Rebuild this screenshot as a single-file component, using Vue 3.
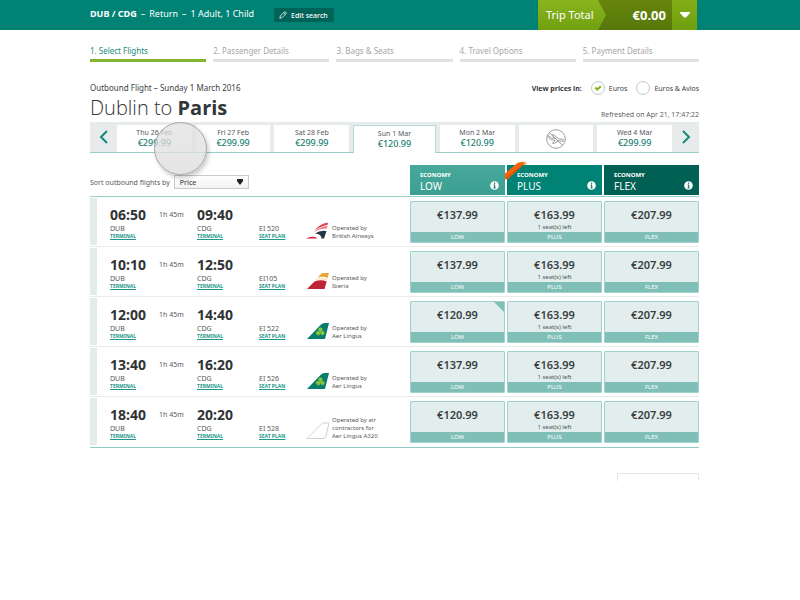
<script setup>
import { ref } from 'vue'

const steps = ['1. Select Flights', '2. Passenger Details', '3. Bags & Seats', '4. Travel Options', '5. Payment Details']

const days = [
  { date: 'Thu 26 Feb', price: '€299.99' },
  { date: 'Fri 27 Feb', price: '€299.99' },
  { date: 'Sat 28 Feb', price: '€299.99' },
  { date: 'Sun 1 Mar', price: '€120.99', active: true },
  { date: 'Mon 2 Mar', price: '€120.99' },
  { date: '', price: '' },
  { date: 'Wed 4 Mar', price: '€299.99' },
]

const fares = ['LOW', 'PLUS', 'FLEX']

const flights = [
  { dep: '06:50', arr: '09:40', no: 'EI 520', tail: 'ba', operator: ['Operated by', 'British Airways'], prices: ['€137.99', '€163.99', '€207.99'] },
  { dep: '10:10', arr: '12:50', no: 'EI105', tail: 'iberia', operator: ['Operated by', 'Iberia'], prices: ['€137.99', '€163.99', '€207.99'] },
  { dep: '12:00', arr: '14:40', no: 'EI 522', tail: 'lingus', operator: ['Operated by', 'Aer Lingus'], prices: ['€120.99', '€163.99', '€207.99'], lowest: true },
  { dep: '13:40', arr: '16:20', no: 'EI 526', tail: 'lingus', operator: ['Operated by', 'Aer Lingus'], prices: ['€137.99', '€163.99', '€207.99'] },
  { dep: '18:40', arr: '20:20', no: 'EI 528', tail: 'plain', operator: ['Operated by air', 'contractors for', 'Aer Lingus A320'], prices: ['€120.99', '€163.99', '€207.99'] },
]

const currency = ref('euros')
const sort = ref('Price')
</script>

<template>
  <div class="page">
    <header class="topbar">
      <p class="trip"><strong>DUB / CDG</strong><span>–</span><span>Return</span><span>–</span><span>1 Adult, 1 Child</span></p>
      <button class="edit" type="button">
        <svg viewBox="0 0 10 10" class="pencil"><path d="M1 9l.7-2.800L6.900 1q.5-.4 1 0l1.100 1.100q.4.500 0 1L3.800 8.300zM5.900 2l2.100 2.100" /></svg>
        Edit search
      </button>
      <div class="total">
        <span class="total-label">Trip Total</span>
        <strong class="total-value">€0.00</strong>
        <button class="total-toggle" type="button" aria-label="Trip details">
          <svg viewBox="0 0 12 8"><path d="M1 1h10v1L7 6.500H5L1 2z" /></svg>
        </button>
      </div>
    </header>

    <main class="content">
      <ol class="steps">
        <li v-for="(step, i) in steps" :key="step" :class="{ current: i === 0 }">{{ step }}</li>
      </ol>

      <section class="heading">
        <div>
          <p class="outbound">Outbound Flight – Sunday 1 March 2016</p>
          <h1>Dublin to <b>Paris</b></h1>
        </div>
        <div class="heading-side">
          <div class="currency">
            <b>View prices in:</b>
            <label>
              <span class="radio"><input v-model="currency" type="radio" name="currency" value="euros" />
                <svg v-if="currency === 'euros'" viewBox="0 0 8 8"><path d="M1.200 3.500l2 2L6.800 2.200" /></svg></span>
              Euros
            </label>
            <label>
              <span class="radio"><input v-model="currency" type="radio" name="currency" value="avios" />
                <svg v-if="currency === 'avios'" viewBox="0 0 8 8"><path d="M1.200 3.500l2 2L6.800 2.200" /></svg></span>
              Euros &amp; Avios
            </label>
          </div>
          <p class="refreshed">Refreshed on Apr 21, 17:47:22</p>
        </div>
      </section>

      <nav class="dates">
        <button class="arrow" type="button" aria-label="Earlier dates"><svg viewBox="0 0 10 14"><path d="M8 1L2 7l6 6" /></svg></button>
        <div class="days">
          <button v-for="(day, i) in days" :key="i" type="button" class="day" :class="{ active: day.active }" :aria-label="day.date ? null : 'No flights'">
            <template v-if="day.date"><span>{{ day.date }}</span><b>{{ day.price }}</b></template>
            <svg v-else class="noplane" viewBox="0 0 20 20">
              <circle cx="10" cy="10" r="9.300" />
              <path d="M1.500 6.800h1.400l2.300 2.100 3.500.5L6 5.800h1.700l5 4.100 3.300.3q1.800.4 2.200 1.400-.8.700-2.500.6l-3.200-.3-4.300 2.500H6.500l2.600-3-4.700-.9zM3.500 3.700l13 12.600" />
            </svg>
          </button>
        </div>
        <button class="arrow" type="button" aria-label="Later dates"><svg viewBox="0 0 10 14"><path d="M2 1l6 6-6 6" /></svg></button>
        <span class="touch"></span>
      </nav>

      <table class="flights">
        <colgroup>
          <col class="c-dep" /><col class="c-time" /><col class="c-arr" /><col class="c-no" /><col class="c-tail" /><col />
          <col v-for="fare in fares" :key="fare" class="c-fare" />
        </colgroup>
        <thead>
          <tr>
            <th colspan="6" class="sort-cell">
              <div class="sort">
                <label for="sort">Sort outbound flights by</label>
                <span class="select">
                  <select id="sort" v-model="sort"><option>Price</option><option>Departure</option></select>
                  <svg viewBox="0 0 8 6"><path d="M1 0h6v2L4.500 5.500h-1L1 2z" /></svg>
                </span>
              </div>
            </th>
            <th v-for="fare in fares" :key="fare" class="fare-cell">
              <div class="fare-head" :class="fare.toLowerCase()">
                <b>ECONOMY</b><span>{{ fare }}</span>
                <svg class="info" viewBox="0 0 9 9"><circle cx="4.500" cy="4.500" r="4.300" /><path d="M4.700 1.500v1.400M3.600 3.900h1.100v2.900M3.500 6.900h2.100" /></svg>
                <svg v-if="fare === 'PLUS'" class="ribbon" viewBox="0 0 22 19"><path class="gold" d="M15 1l5-.5 2 3h-5z" /><path class="band" d="M0 12.500L13 1.500l5-.5 1 2.500L3 18l-3 .5z" /><path class="marks" d="M1 17.500L18.500 3.500" /></svg>
              </div>
            </th>
          </tr>
        </thead>
        <tbody>
          <tr v-for="flight in flights" :key="flight.no">
            <td class="dep"><div class="stop"><b>{{ flight.dep }}</b><span>DUB</span><a href="#">TERMINAL</a></div></td>
            <td class="duration">1h 45m</td>
            <td><div class="stop"><b>{{ flight.arr }}</b><span>CDG</span><a href="#">TERMINAL</a></div></td>
            <td><div class="stop"><span>{{ flight.no }}</span><a href="#">SEAT PLAN</a></div></td>
            <td>
              <svg class="tail" viewBox="0 0 24 18">
                <g v-if="flight.tail === 'ba'">
                  <path fill="#dc4450" d="M9 8.500Q13 2 22 .5L21.500 3Q14 4 9 8.500z" />
                  <path fill="#e8828a" d="M7.500 10.500Q13 4.500 21.500 4l-.5 2.500Q13 6.500 7.500 10.500z" />
                  <path fill="#253340" d="M9 11.500q5-3.500 11.500-2.500L18 16.500h-2.500Q15.500 12 9 11.500z" />
                  <path fill="#cf1f33" d="M0 16.500q4-2.500 9-1.500l2.500 1.500z" />
                </g>
                <g v-else-if="flight.tail === 'iberia'">
                  <path fill="#e6a63c" d="M12 5.500Q15 1 17 1h6l-1.500 5Q17 4 12 5.500z" />
                  <path fill="#f3dfb0" d="M10.500 6.800Q17 5.200 21.300 7.300l-.3 1Q16 6.500 9.500 8z" />
                  <path fill="#bd2436" d="M1 17l7.500-7.500q6-2.500 12.200 0L18.500 17z" />
                </g>
                <g v-else-if="flight.tail === 'lingus'">
                  <path fill="#087d6b" d="M1 17L14.500 3q2-2 4-2H23l-4 16z" />
                  <g fill="#8ac63a"><circle cx="14.500" cy="7.500" r="2.100" /><circle cx="12" cy="11" r="2.100" /><circle cx="16.500" cy="11" r="2.100" /></g>
                  <path fill="none" stroke="#8ac63a" d="M14.300 9q0 3-1.800 4.500" />
                </g>
                <path v-else class="outline" d="M1 16.500L15 2.500q1.500-1.500 3-1.500h5l-3 13q-.5 2.500-3 2.500z" />
              </svg>
            </td>
            <td class="operator"><span v-for="line in flight.operator" :key="line">{{ line }}</span></td>
            <td v-for="(price, i) in flight.prices" :key="i" class="fare-cell">
              <button class="fare" type="button">
                <span class="fare-body"><b>{{ price }}</b><small v-if="i === 1">1 seat(s) left</small></span>
                <span class="fare-name">{{ fares[i] }}</span>
                <i v-if="flight.lowest && i === 0" class="corner"></i>
              </button>
            </td>
          </tr>
        </tbody>
      </table>

      <div class="next"></div>
    </main>
  </div>
</template>

<style>
body {
  background: #fff;
}
</style>

<style scoped>
.page {
  font-family: "Noto Sans", "Open Sans", sans-serif;
  font-size: 7px;
  color: #55585a;
  white-space: nowrap;
}
.page * {
  box-sizing: border-box;
}
p, h1, ol {
  margin: 0;
  padding: 0;
}
button {
  font: inherit;
  color: inherit;
  border: 0;
  padding: 0;
  background: none;
  cursor: pointer;
}
svg {
  display: block;
}
.topbar {
  display: flex;
  align-items: center;
  height: 30px;
  padding: 0 103px 0 90px;
  background: #008375;
  color: #fff;
}
.trip {
  display: flex;
  gap: 4px;
  font-size: 9px;
  line-height: 12px;
  padding-bottom: 2px;
}
.edit {
  display: flex;
  align-items: center;
  gap: 4px;
  height: 14px;
  margin-left: 20px;
  padding: 0 6px 0 5px;
  background: #006358;
  border-radius: 1px;
  font-size: 7px;
  font-weight: 500;
}
.pencil {
  width: 8px;
  height: 8px;
  fill: none;
  stroke: #fff;
  stroke-width: 1;
}
.total {
  display: flex;
  align-items: stretch;
  height: 30px;
  margin-left: auto;
  background: linear-gradient(#66850b, #56780a);
}
.total-label {
  display: flex;
  align-items: center;
  width: 68px;
  padding-left: 8px;
  padding-bottom: 1px;
  background: linear-gradient(#8bb51d, #70a010);
  clip-path: polygon(0 0, 60px 0, 100% 50%, 60px 100%, 0 100%);
  font-size: 11px;
}
.total-value {
  display: flex;
  align-items: center;
  justify-content: flex-end;
  width: 66px;
  padding-right: 6px;
  padding-bottom: 1px;
  font-size: 13px;
}
.total-toggle {
  display: flex;
  align-items: center;
  justify-content: center;
  width: 25px;
  background: linear-gradient(#82ad16, #6f9f10);
}
.total-toggle svg {
  width: 12px;
  height: 8px;
  fill: #fff;
}
.content {
  padding: 14px 101px 0 90px;
}
.steps {
  display: grid;
  grid-template-columns: repeat(5, 1fr);
  gap: 7px;
  list-style: none;
  font-size: 8px;
  line-height: 14px;
  color: #a4a6a6;
}
.steps li {
  border-bottom: 3px solid #e0e1e1;
  padding-bottom: 1px;
}
.steps .current {
  color: #1a8a7c;
  border-color: #82b530;
}
.heading {
  display: flex;
  justify-content: space-between;
  padding-top: 19px;
  height: 60px;
}
.outbound {
  font-size: 8px;
  line-height: 14px;
  color: #3d4041;
}
h1 {
  font-family: "Open Sans", "Noto Sans", sans-serif;
  font-size: 20px;
  line-height: 26px;
  font-weight: 300;
  color: #333637;
}
h1 b {
  font-weight: 700;
}
.heading-side {
  text-align: right;
}
.currency {
  display: flex;
  align-items: center;
  height: 14px;
  gap: 9px;
  font-family: "Open Sans", "Noto Sans", sans-serif;
  color: #333637;
}
.currency label {
  display: flex;
  align-items: center;
  gap: 4px;
}
.radio {
  display: grid;
  place-items: center;
}
.radio > * {
  grid-area: 1 / 1;
}
.radio input {
  appearance: none;
  width: 14px;
  height: 14px;
  margin: 0;
  border: 1px solid #c4c8c8;
  border-radius: 50%;
  background: #fff;
}
.radio svg {
  width: 8px;
  height: 8px;
  fill: none;
  stroke: #82b51a;
  stroke-width: 2;
  pointer-events: none;
}
.refreshed {
  padding-top: 14px;
  font-family: "Open Sans", "Noto Sans", sans-serif;
  line-height: 12px;
}
.dates {
  position: relative;
  display: flex;
  height: 31px;
  background: #e8ebeb;
  border-bottom: 1px solid #9ad0c9;
}
.arrow {
  display: flex;
  align-items: center;
  justify-content: center;
  width: 27px;
}
.arrow svg {
  width: 10px;
  height: 14px;
  fill: none;
  stroke: #148a7c;
  stroke-width: 2;
}
.days {
  display: flex;
  flex: 1;
  gap: 4px;
  padding-top: 3px;
}
.day {
  display: flex;
  flex: 75 1 0;
  flex-direction: column;
  align-items: center;
  justify-content: center;
  background: #fff;
}
.day span {
  line-height: 9px;
}
.day b {
  font-size: 9px;
  line-height: 12px;
  font-weight: 500;
  color: #1a7f73;
}
.day.active {
  flex-grow: 81;
  margin-bottom: -1px;
  padding-bottom: 1px;
  border: 1px solid #b9d9d6;
  border-bottom: 0;
}
.noplane {
  width: 20px;
  height: 20px;
  fill: none;
  stroke: #9b9e9e;
  stroke-width: 1;
}
.touch {
  position: absolute;
  left: 64px;
  top: 0;
  width: 53px;
  height: 53px;
  border: 1px solid #a5a5a5;
  border-radius: 50%;
  background: linear-gradient(rgba(225, 225, 225, .75), rgba(220, 220, 220, .75));
  box-shadow: 2px 3px 4px rgba(0, 0, 0, .2);
  pointer-events: none;
}
.flights {
  width: 100%;
  margin-top: 12px;
  table-layout: fixed;
  border-collapse: separate;
  border-spacing: 0;
  border-bottom: 1px solid #8fcac3;
}
.c-dep { width: 67px; }
.c-time { width: 40px; }
.c-arr { width: 62px; }
.c-no { width: 47px; }
.c-tail { width: 26px; }
.c-fare { width: 97px; }
th, td {
  padding: 0;
  text-align: left;
  font-weight: 400;
}
th {
  height: 32px;
  vertical-align: top;
  border-bottom: 1px solid #9ad0c9;
}
.sort {
  display: flex;
  align-items: center;
  gap: 4px;
  padding-top: 10px;
}
.select {
  display: grid;
  align-items: center;
  width: 75px;
}
.select > * {
  grid-area: 1 / 1;
}
.select select {
  appearance: none;
  width: 100%;
  height: 14px;
  padding: 0 5px;
  border: 1px solid #c9cccc;
  border-radius: 0;
  background: linear-gradient(#fff, #f1f2f2);
  font: 500 7px "Noto Sans", sans-serif;
  color: #4a4d4e;
}
.select svg {
  justify-self: end;
  width: 8px;
  height: 6px;
  margin-right: 5px;
  fill: #222;
  pointer-events: none;
}
.fare-cell {
  padding-left: 2px;
}
.fare-head {
  position: relative;
  display: flex;
  flex-direction: column;
  height: 30px;
  padding: 6px 10px 0;
  color: #fff;
}
.fare-head b {
  font-size: 6px;
  line-height: 9px;
}
.fare-head span {
  font-size: 10px;
  line-height: 12px;
}
.fare-head.low { background: linear-gradient(#48a99b, #3b9f91); }
.fare-head.plus { background: #008274; }
.fare-head.flex { background: #006054; }
.info {
  position: absolute;
  right: 6px;
  bottom: 5px;
  width: 9px;
  height: 9px;
  fill: #fff;
}
.info path {
  fill: none;
  stroke: #006054;
  stroke-width: 1;
}
.ribbon {
  position: absolute;
  left: -2px;
  top: -4px;
  width: 22px;
  height: 19px;
}
.gold { fill: #e3a24a; }
.band { fill: #f8630a; }
.marks {
  fill: none;
  stroke: #c4480c;
  stroke-width: 1;
}
td {
  height: 50px;
  padding-bottom: 6px;
  vertical-align: bottom;
  border-bottom: 1px solid #e9eaea;
}
tr:last-child td {
  border-bottom-color: transparent;
}
.dep {
  padding-left: 20px;
  background: linear-gradient(#e1eceb, #e1eceb) 0 1px / 7px 47px no-repeat;
}
.stop {
  display: flex;
  flex-direction: column;
  align-items: flex-start;
}
.stop b {
  font-size: 14px;
  line-height: 20px;
  color: #303334;
}
.stop span {
  line-height: 8px;
}
.stop a {
  font-size: 5px;
  line-height: 7px;
  font-weight: 700;
  color: #1f978a;
}
.duration {
  padding: 8px 0 0 2px;
  line-height: 20px;
  vertical-align: top;
}
.tail {
  width: 24px;
  height: 18px;
}
.outline {
  fill: none;
  stroke: #cfd1d1;
  stroke-width: 1;
}
.operator span {
  display: block;
  font-size: 6px;
  line-height: 8px;
}
td.fare-cell {
  padding: 4px 0 0 2px;
  vertical-align: top;
}
.fare {
  position: relative;
  display: flex;
  flex-direction: column;
  width: 100%;
  height: 42px;
  border: 1px solid #9fd2cc;
  border-radius: 1px;
  background: #e2eded;
}
.fare-body {
  display: flex;
  flex: 1;
  flex-direction: column;
  align-items: center;
  align-self: stretch;
  padding-top: 5px;
}
.fare-body b {
  font-size: 11px;
  line-height: 16px;
  font-weight: 600;
  color: #3a3d3e;
}
.fare-body small {
  font-size: 6px;
  line-height: 8px;
}
.fare-name {
  align-self: stretch;
  background: #80bfb7;
  color: #fff;
  font-size: 6px;
  line-height: 10px;
  text-align: center;
}
.corner {
  position: absolute;
  right: 0;
  top: 0;
  width: 10px;
  height: 10px;
  background: #80bfb7;
  clip-path: polygon(0 0, 100% 0, 100% 100%);
}
.next {
  width: 82px;
  height: 8px;
  margin: 25px 0 0 auto;
  border: 1px solid #e2e4e4;
  border-bottom: 0;
  border-radius: 2px 2px 0 0;
}
</style>
